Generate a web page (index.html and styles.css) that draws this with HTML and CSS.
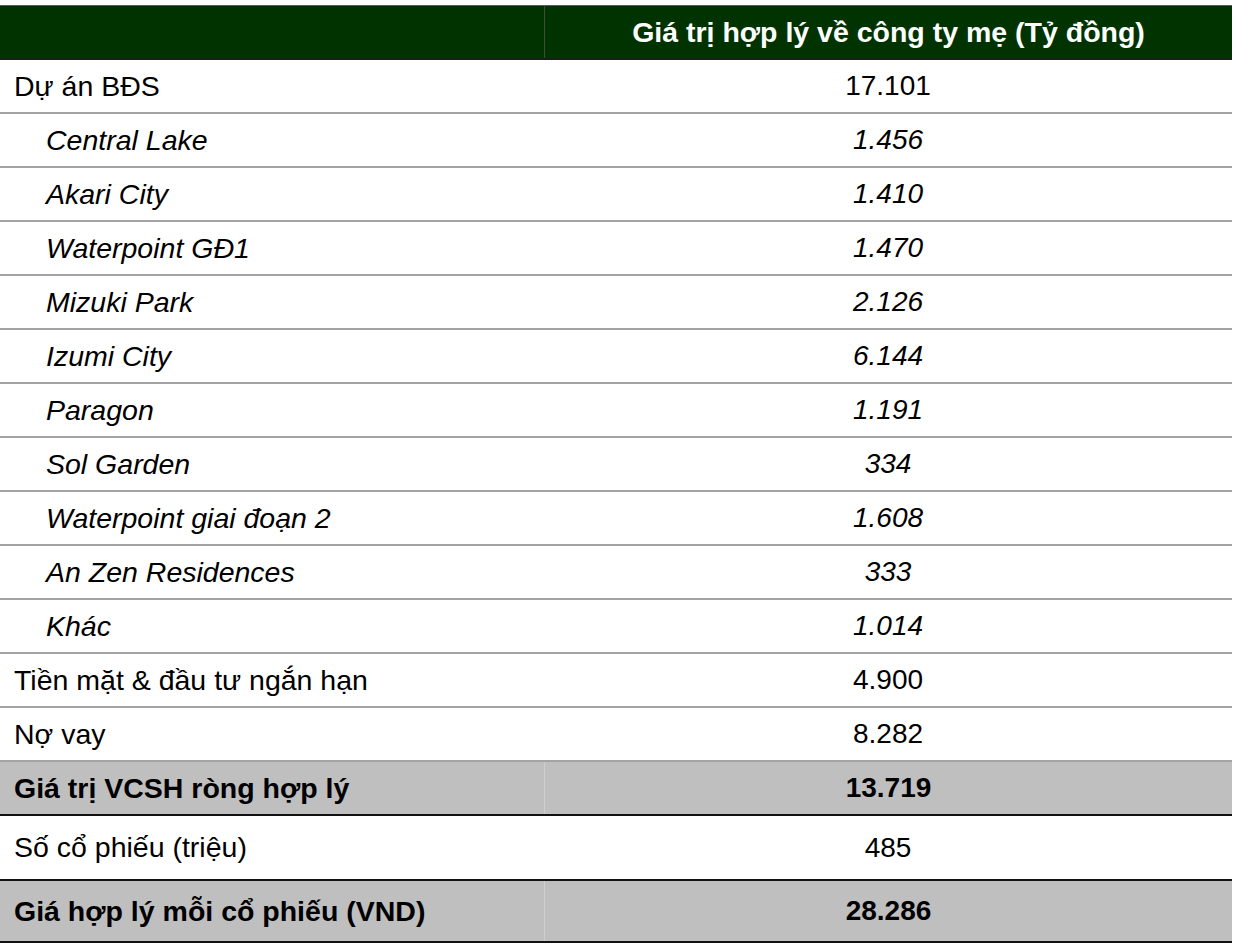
FILE: index.html
```html
<!DOCTYPE html>
<html lang="vi">
<head>
<meta charset="utf-8">
<title>Giá trị hợp lý</title>
<link rel="stylesheet" href="styles.css">
</head>
<body>
<div class="table">
  <div class="row head">
    <div class="cell label"></div>
    <div class="cell value">Giá trị hợp lý về công ty mẹ (Tỷ đồng)</div>
  </div>
  <div class="row"><div class="cell label">Dự án BĐS</div><div class="cell value">17.101</div></div>
  <div class="row sub"><div class="cell label">Central Lake</div><div class="cell value">1.456</div></div>
  <div class="row sub"><div class="cell label">Akari City</div><div class="cell value">1.410</div></div>
  <div class="row sub"><div class="cell label">Waterpoint GĐ1</div><div class="cell value">1.470</div></div>
  <div class="row sub"><div class="cell label">Mizuki Park</div><div class="cell value">2.126</div></div>
  <div class="row sub"><div class="cell label">Izumi City</div><div class="cell value">6.144</div></div>
  <div class="row sub"><div class="cell label">Paragon</div><div class="cell value">1.191</div></div>
  <div class="row sub"><div class="cell label">Sol Garden</div><div class="cell value">334</div></div>
  <div class="row sub"><div class="cell label">Waterpoint giai đoạn 2</div><div class="cell value">1.608</div></div>
  <div class="row sub"><div class="cell label">An Zen Residences</div><div class="cell value">333</div></div>
  <div class="row sub"><div class="cell label">Khác</div><div class="cell value">1.014</div></div>
  <div class="row"><div class="cell label">Tiền mặt &amp; đầu tư ngắn hạn</div><div class="cell value">4.900</div></div>
  <div class="row"><div class="cell label">Nợ vay</div><div class="cell value">8.282</div></div>
  <div class="row total"><div class="cell label">Giá trị VCSH ròng hợp lý</div><div class="cell value">13.719</div></div>
  <div class="row shares"><div class="cell label">Số cổ phiếu (triệu)</div><div class="cell value">485</div></div>
  <div class="row total last"><div class="cell label">Giá hợp lý mỗi cổ phiếu (VND)</div><div class="cell value">28.286</div></div>
</div>
</body>
</html>
```

FILE: styles.css
```css
html, body {
  margin: 0;
  padding: 0;
  background: #ffffff;
}
body {
  padding-top: 5px;
  font-family: "Liberation Sans", Arial, sans-serif;
  font-size: 28.5px;
  color: #000;
}
.table {
  width: 1232px;
  display: flex;
  flex-direction: column;
}
.row {
  display: grid;
  grid-template-columns: 544px 688px;
  height: 54px;
  box-sizing: border-box;
  border-bottom: 2px solid #a3a3a3;
}
.cell {
  display: flex;
  align-items: center;
  box-sizing: border-box;
}
.label {
  padding-left: 14px;
}
.value {
  justify-content: center;
  font-size: 28px;
}
.sub .label {
  padding-left: 46px;
}
.sub .cell {
  font-style: italic;
}
.head {
  height: 55px;
  background: #003300;
  border-top: 1px solid #5a5a5a;
  border-bottom: 2px solid #1c1c1c;
  color: #fff;
  font-weight: bold;
}
.head .value {
  font-size: 28.5px;
  border-left: 1px solid #3d4a3d;
}
.total {
  background: #bfbfbf;
  font-weight: bold;
  border-bottom: 2px solid #111;
}
.total .value {
  border-left: 1px solid #cfcfcf;
}
.shares {
  height: 65px;
  border-bottom: 2px solid #111;
}
.last {
  height: 62px;
}
```
